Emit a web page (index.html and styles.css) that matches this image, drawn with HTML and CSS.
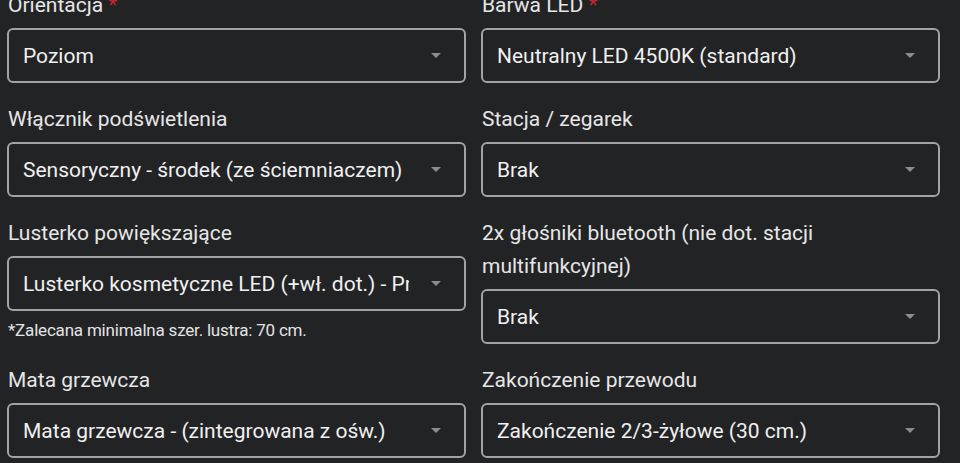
FILE: index.html
```html
<html>

<head>
    <link rel="stylesheet" href="styles.css">
</head>

<body>
    <div class="form-grid">
        <div class="field">
            <label class="field-label">Orientacja <span class="req">*</span></label>
            <div class="select">
                <span class="select-value">Poziom</span>
                <span class="select-arrow"></span>
            </div>
        </div>
        <div class="field">
            <label class="field-label">Barwa LED <span class="req">*</span></label>
            <div class="select">
                <span class="select-value">Neutralny LED 4500K (standard)</span>
                <span class="select-arrow"></span>
            </div>
        </div>

        <div class="field">
            <label class="field-label">Włącznik podświetlenia</label>
            <div class="select">
                <span class="select-value">Sensoryczny - środek (ze ściemniaczem)</span>
                <span class="select-arrow"></span>
            </div>
        </div>
        <div class="field">
            <label class="field-label">Stacja / zegarek</label>
            <div class="select">
                <span class="select-value">Brak</span>
                <span class="select-arrow"></span>
            </div>
        </div>

        <div class="field">
            <label class="field-label">Lusterko powiększające</label>
            <div class="select">
                <span class="select-value">Lusterko kosmetyczne LED (+wł. dot.) - Prawa strona</span>
                <span class="select-arrow"></span>
            </div>
            <p class="field-hint">*Zalecana minimalna szer. lustra: 70 cm.</p>
        </div>
        <div class="field">
            <label class="field-label">2x głośniki bluetooth (nie dot. stacji multifunkcyjnej)</label>
            <div class="select">
                <span class="select-value">Brak</span>
                <span class="select-arrow"></span>
            </div>
        </div>

        <div class="field">
            <label class="field-label">Mata grzewcza</label>
            <div class="select">
                <span class="select-value">Mata grzewcza - (zintegrowana z ośw.)</span>
                <span class="select-arrow"></span>
            </div>
        </div>
        <div class="field">
            <label class="field-label">Zakończenie przewodu</label>
            <div class="select">
                <span class="select-value">Zakończenie 2/3-żyłowe (30 cm.)</span>
                <span class="select-arrow"></span>
            </div>
        </div>
    </div>
</body>

</html>
```

FILE: styles.css
```css
html,
body {
    margin: 0;
    padding: 0;
    background: #222325;
    overflow: hidden;
}

body {
    font-family: Roboto, "Liberation Sans", sans-serif;
    color: #e8e8e8;
}

.form-grid {
    display: grid;
    grid-template-columns: 459px 459px;
    column-gap: 15px;
    row-gap: 20px;
    align-items: start;
    padding-left: 7px;
    margin-top: -11px;
}

.field-label {
    display: block;
    font-size: 21px;
    line-height: 33px;
    color: #e6e6e6;
    padding-left: 1px;
    margin-bottom: 6px;
}

.req {
    color: #c3262c;
}

.select {
    height: 55px;
    box-sizing: border-box;
    border: 2px solid #a3a3a3;
    border-radius: 6px;
    display: flex;
    align-items: center;
    padding: 0 23px 0 14px;
}

.select-value {
    flex: 1;
    font-size: 21px;
    color: #f0f0f0;
    white-space: nowrap;
    overflow: hidden;
    margin-right: 22px;
}

.select-arrow {
    width: 0;
    height: 0;
    border-left: 5px solid transparent;
    border-right: 5px solid transparent;
    border-top: 5px solid #8c8c8c;
}

.field-hint {
    margin: 9px 0 0 1px;
    font-size: 17px;
    letter-spacing: -0.2px;
    color: #e4e4e4;
}
```
